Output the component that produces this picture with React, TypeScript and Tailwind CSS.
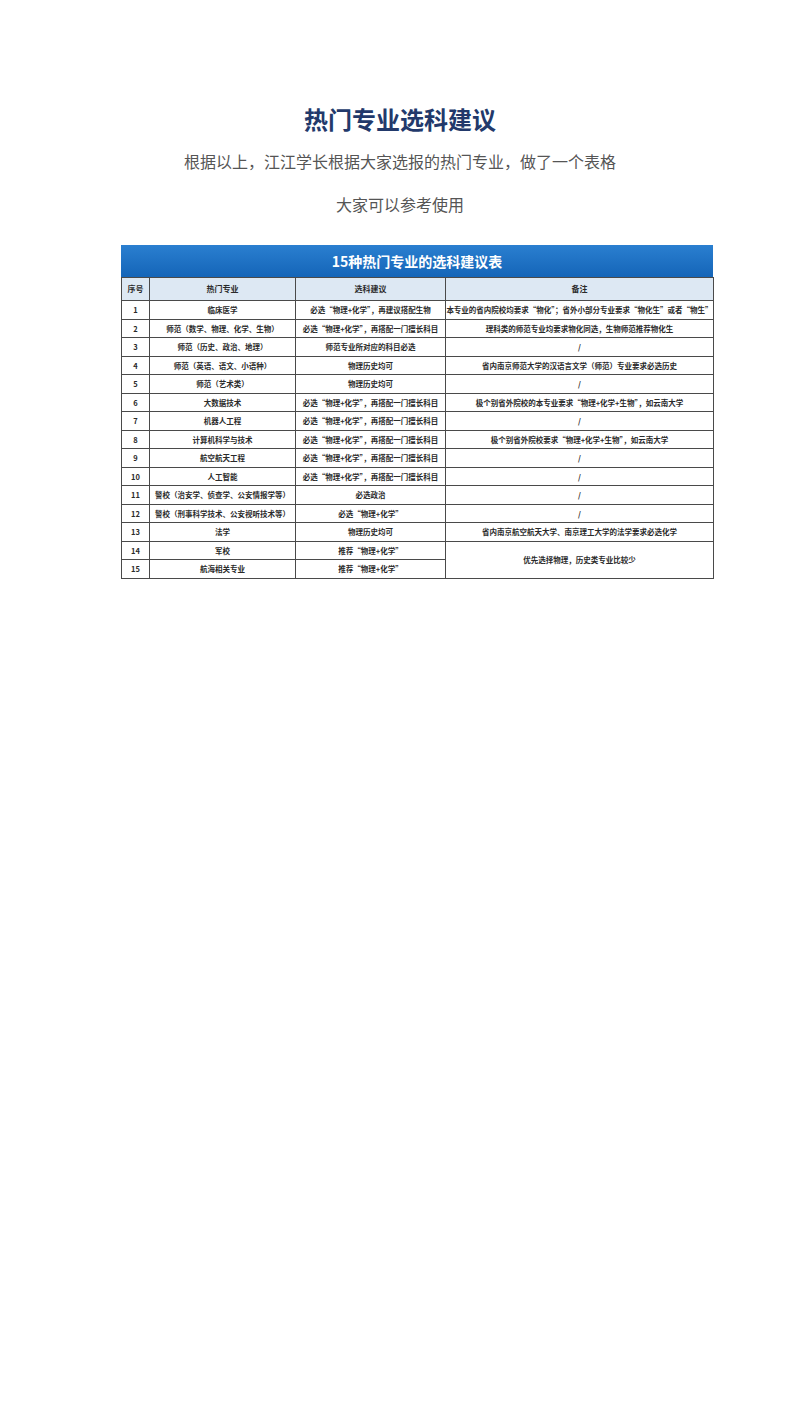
const PAIR = '必选“物理+化学”，再搭配一门擅长科目';

const rows: { no: number; major: string; advice: string; note?: string; span?: number }[] = [
  { no: 1, major: '临床医学', advice: '必选“物理+化学”，再建议搭配生物', note: '本专业的省内院校均要求“物化”；省外小部分专业要求“物化生”或者“物生”' },
  { no: 2, major: '师范（数学、物理、化学、生物）', advice: PAIR, note: '理科类的师范专业均要求物化同选，生物师范推荐物化生' },
  { no: 3, major: '师范（历史、政治、地理）', advice: '师范专业所对应的科目必选', note: '/' },
  { no: 4, major: '师范（英语、语文、小语种）', advice: '物理历史均可', note: '省内南京师范大学的汉语言文学（师范）专业要求必选历史' },
  { no: 5, major: '师范（艺术类）', advice: '物理历史均可', note: '/' },
  { no: 6, major: '大数据技术', advice: PAIR, note: '极个别省外院校的本专业要求“物理+化学+生物”，如云南大学' },
  { no: 7, major: '机器人工程', advice: PAIR, note: '/' },
  { no: 8, major: '计算机科学与技术', advice: PAIR, note: '极个别省外院校要求“物理+化学+生物”，如云南大学' },
  { no: 9, major: '航空航天工程', advice: PAIR, note: '/' },
  { no: 10, major: '人工智能', advice: PAIR, note: '/' },
  { no: 11, major: '警校（治安学、侦查学、公安情报学等）', advice: '必选政治', note: '/' },
  { no: 12, major: '警校（刑事科学技术、公安视听技术等）', advice: '必选“物理+化学”', note: '/' },
  { no: 13, major: '法学', advice: '物理历史均可', note: '省内南京航空航天大学、南京理工大学的法学要求必选化学' },
  { no: 14, major: '军校', advice: '推荐“物理+化学”', note: '优先选择物理，历史类专业比较少', span: 2 },
  { no: 15, major: '航海相关专业', advice: '推荐“物理+化学”' },
];

const cell = 'border border-[#4a4a4a] text-center whitespace-nowrap overflow-hidden px-0 leading-none';

export default function App() {
  return (
    <div className="min-h-[1410px] bg-white font-['Noto_Sans_CJK_SC','Noto_Sans',sans-serif]">
      <main className="pt-[104px]">
        <h1 className="text-center text-[24px] leading-[30px] font-bold text-[#22396b]">热门专业选科建议</h1>
        <p className="mt-[15px] text-center text-[16px] leading-[24px] text-[#555555]">
          根据以上，江江学长根据大家选报的热门专业，做了一个表格
        </p>
        <p className="mt-[19px] text-center text-[16px] leading-[24px] text-[#555555]">大家可以参考使用</p>

        <div className="mt-[29px] ml-[121px] w-[592px]">
          <div className="h-[32px] bg-gradient-to-b from-[#2a7fd0] to-[#1465b8] flex items-center justify-center text-white text-[14px] font-bold">
            15种热门专业的选科建议表
          </div>
          <table className="w-full table-fixed border-collapse text-[7.5px] font-semibold text-[#2a2a2a]">
            <colgroup>
              <col className="w-[28px]" />
              <col className="w-[146px]" />
              <col className="w-[150px]" />
              <col className="w-[268px]" />
            </colgroup>
            <thead>
              <tr className="h-[23px] bg-[#dde8f3] text-[8px] font-bold">
                <th className={cell}>序号</th>
                <th className={cell}>热门专业</th>
                <th className={cell}>选科建议</th>
                <th className={cell}>备注</th>
              </tr>
            </thead>
            <tbody>
              {rows.map((r) => (
                <tr key={r.no} className="h-[18.5px]">
                  <td className={cell + ' font-bold'}>{r.no}</td>
                  <td className={cell}>{r.major}</td>
                  <td className={cell}>{r.advice}</td>
                  {r.note !== undefined && (
                    <td className={cell} rowSpan={r.span ?? 1}>
                      {r.note}
                    </td>
                  )}
                </tr>
              ))}
            </tbody>
          </table>
        </div>
      </main>
    </div>
  );
}
